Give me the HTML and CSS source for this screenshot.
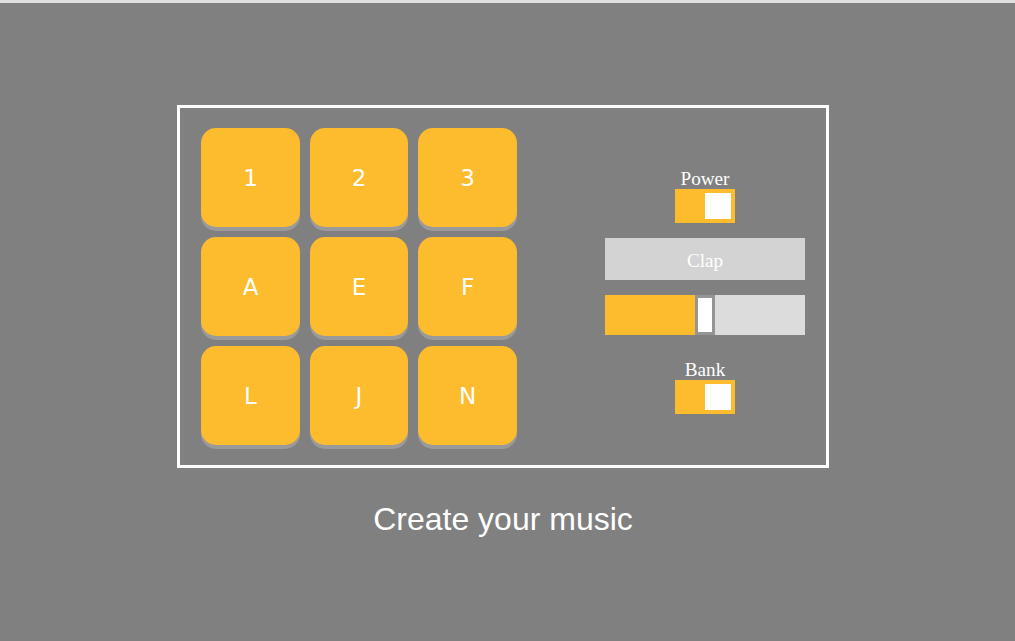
FILE: index.html
```html
<!DOCTYPE html>
<html lang="en">
<head>
<meta charset="utf-8">
<title>Drum Machine</title>
<link rel="stylesheet" href="styles.css">
</head>
<body>
<div class="page">
  <div class="machine">
    <div class="pads">
      <div class="pad">1</div>
      <div class="pad">2</div>
      <div class="pad">3</div>
      <div class="pad">A</div>
      <div class="pad">E</div>
      <div class="pad">F</div>
      <div class="pad">L</div>
      <div class="pad">J</div>
      <div class="pad">N</div>
    </div>
    <div class="controls">
      <div class="control">
        <div class="label">Power</div>
        <div class="toggle"><div class="knob"></div></div>
      </div>
      <div class="display">Clap</div>
      <div class="slider">
        <div class="fill"></div>
        <div class="thumb"></div>
        <div class="rest"></div>
      </div>
      <div class="control bank">
        <div class="label">Bank</div>
        <div class="toggle"><div class="knob"></div></div>
      </div>
    </div>
  </div>
  <h1 class="title">Create your music</h1>
</div>
</body>
</html>
```

FILE: styles.css
```css
html, body {
  margin: 0;
  padding: 0;
}
body {
  background: #808080;
  border-top: 3px solid #dfdfe2;
  min-height: 638px;
}
.page {
  width: 1006px;
  display: flex;
  flex-direction: column;
  align-items: center;
  padding-top: 102px;
}
.machine {
  border: 3px solid #ffffff;
  padding: 20px 21px;
  box-sizing: border-box;
  width: 652px;
  height: 363px;
  display: flex;
  align-items: flex-start;
}
.pads {
  display: grid;
  grid-template-columns: 99px 98px 99px;
  grid-template-rows: 99px 99px 99px;
  gap: 10px;
}
.pad {
  background: #fdbb2e;
  border-radius: 15px;
  box-shadow: 0 4px 0 #9a9a9a;
  color: #ffffff;
  font-family: "DejaVu Sans", sans-serif;
  font-size: 23px;
  padding-top: 1px;
  box-sizing: border-box;
  display: flex;
  align-items: center;
  justify-content: center;
}
.controls {
  margin-left: 88px;
  width: 200px;
  padding-top: 39px;
  display: flex;
  flex-direction: column;
  align-items: center;
}
.control {
  display: flex;
  flex-direction: column;
  align-items: center;
}
.label {
  font-family: "Liberation Serif", serif;
  font-size: 19.2px;
  line-height: 20px;
  padding-top: 2px;
  color: #ffffff;
}
.toggle {
  width: 60px;
  height: 34px;
  box-sizing: border-box;
  padding: 4px;
  background: #fdbb2e;
  display: flex;
  justify-content: flex-end;
}
.knob {
  width: 26px;
  height: 26px;
  background: #ffffff;
}
.display {
  margin-top: 15px;
  width: 200px;
  height: 42px;
  box-sizing: border-box;
  padding-top: 3px;
  background: #d3d3d3;
  color: #ffffff;
  font-family: "Liberation Serif", serif;
  font-size: 19.2px;
  display: flex;
  align-items: center;
  justify-content: center;
}
.slider {
  margin-top: 15px;
  width: 200px;
  height: 40px;
  display: flex;
}
.fill {
  width: 90px;
  background: #fdbb2e;
}
.thumb {
  width: 20px;
  box-sizing: border-box;
  border: 3px solid #959595;
  background: #ffffff;
}
.rest {
  flex: 1;
  background: #dcdcdc;
}
.bank {
  margin-top: 24px;
}
.bank .label {
  padding-top: 1px;
}
.title {
  margin: 33px 0 0 0;
  font-family: "Liberation Sans", Arial, sans-serif;
  font-size: 32px;
  font-weight: normal;
  color: #ffffff;
  line-height: 37px;
}
```
